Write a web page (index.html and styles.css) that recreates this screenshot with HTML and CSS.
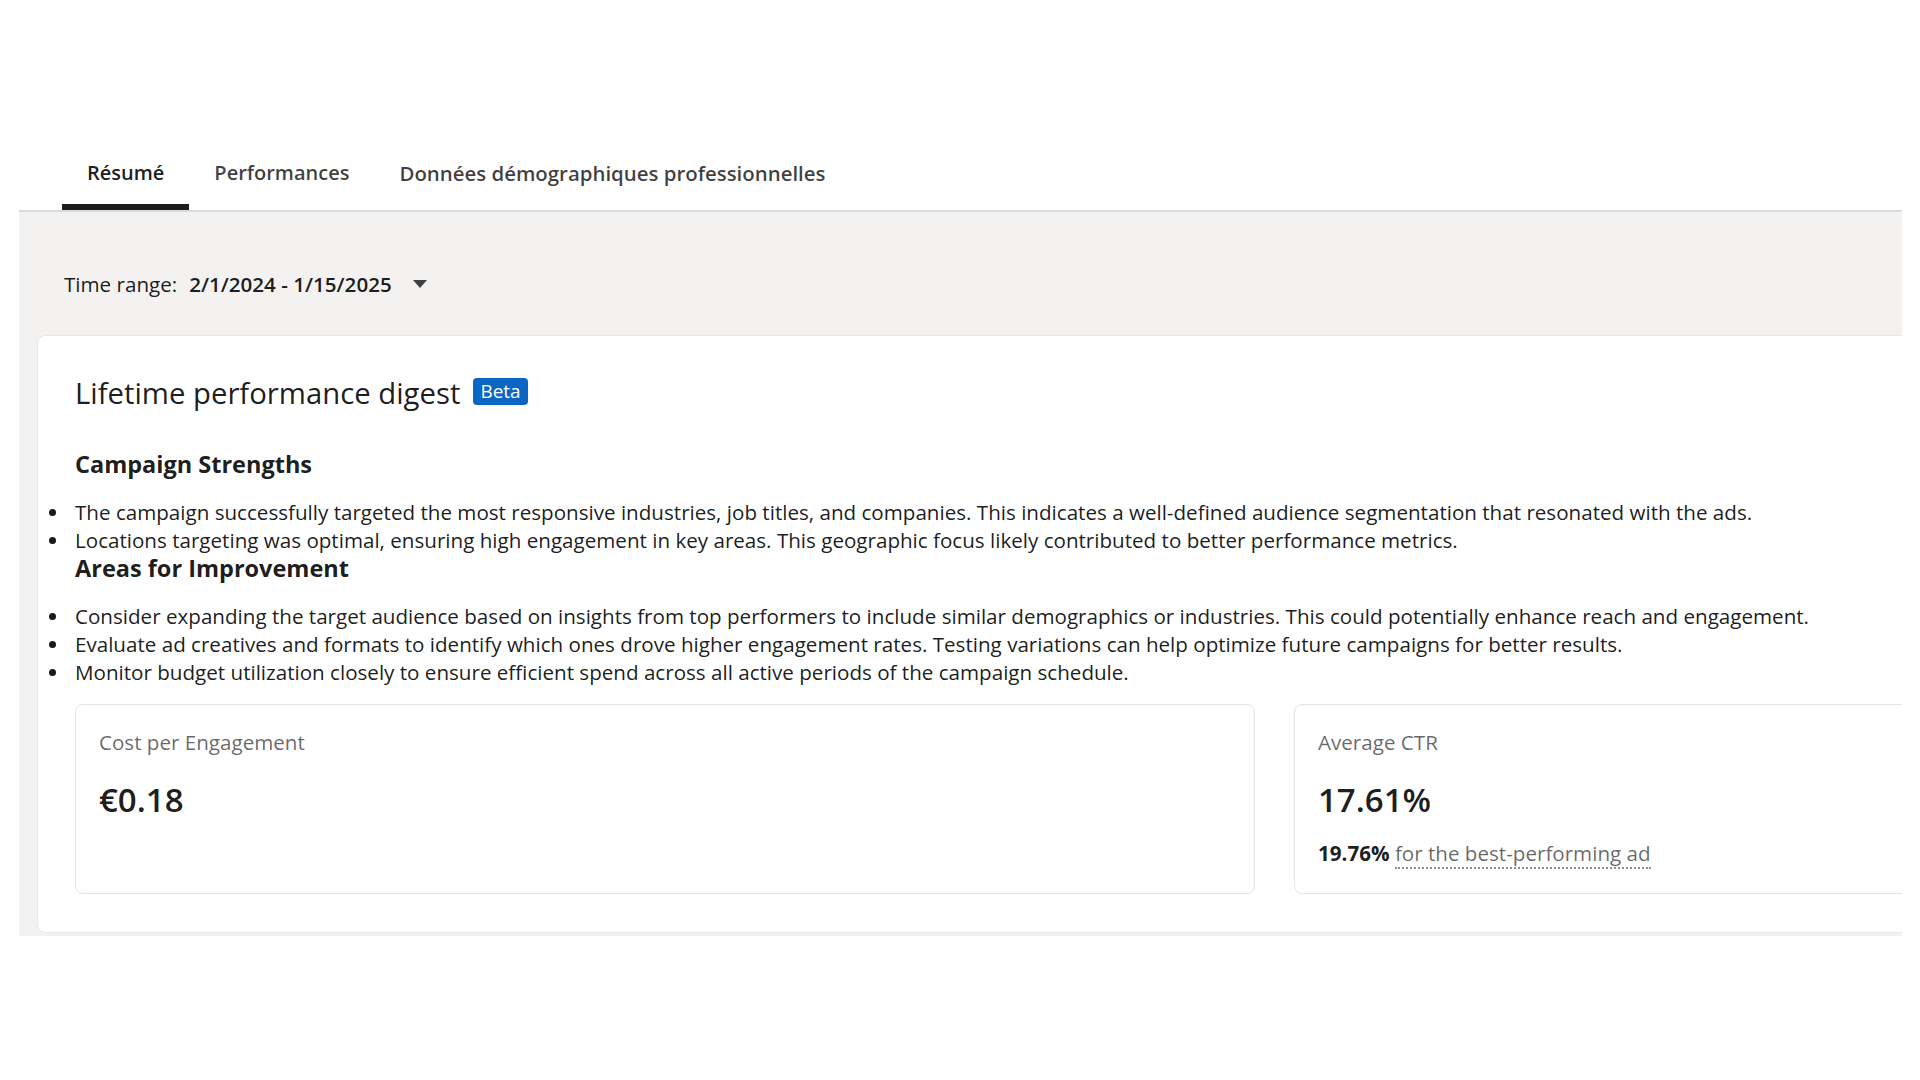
FILE: index.html
```html
<!DOCTYPE html>
<html lang="fr">
<head>
<meta charset="utf-8">
<title>Résumé</title>
<link rel="stylesheet" href="styles.css">
</head>
<body>
<div class="wrap">
  <nav class="tabs">
    <div class="tab active">Résumé</div>
    <div class="tab">Performances</div>
    <div class="tab">Données démographiques professionnelles</div>
  </nav>
  <section class="panel">
    <div class="range">
      <span class="range-label">Time range:</span>
      <span class="range-value">2/1/2024 - 1/15/2025</span>
      <svg class="caret" width="14" height="8" viewBox="0 0 14 8"><path d="M0 0 L14 0 L7 8 Z" fill="#404040"/></svg>
    </div>
    <div class="card">
      <div class="title-row">
        <h2 class="title">Lifetime performance digest</h2>
        <span class="badge">Beta</span>
      </div>
      <h3 class="heading first">Campaign Strengths</h3>
      <ul class="list">
        <li>The campaign successfully targeted the most responsive industries, job titles, and companies. This indicates a well-defined audience segmentation that resonated with the ads.</li>
        <li>Locations targeting was optimal, ensuring high engagement in key areas. This geographic focus likely contributed to better performance metrics.</li>
      </ul>
      <h3 class="heading">Areas for Improvement</h3>
      <ul class="list">
        <li>Consider expanding the target audience based on insights from top performers to include similar demographics or industries. This could potentially enhance reach and engagement.</li>
        <li>Evaluate ad creatives and formats to identify which ones drove higher engagement rates. Testing variations can help optimize future campaigns for better results.</li>
        <li>Monitor budget utilization closely to ensure efficient spend across all active periods of the campaign schedule.</li>
      </ul>
      <div class="metrics">
        <div class="metric">
          <div class="metric-label">Cost per Engagement</div>
          <div class="metric-value">€0.18</div>
        </div>
        <div class="metric">
          <div class="metric-label">Average CTR</div>
          <div class="metric-value">17.61%</div>
          <div class="metric-sub"><strong>19.76%</strong> <span class="dotted">for the best-performing ad</span></div>
        </div>
      </div>
    </div>
  </section>
</div>
</body>
</html>
```

FILE: styles.css
```css
* { box-sizing: border-box; }
html, body { margin: 0; padding: 0; background: #fff; }
body {
  font-family: "Open Sans", "Noto Sans", sans-serif;
  color: rgba(0,0,0,0.9);
  font-size: 20.6px;
  line-height: 28px;
  overflow: hidden;
  width: 1920px;
  height: 1080px;
}
.wrap {
  width: 1883px;
  margin-left: 19px;
  padding-top: 159px;
}
.tabs {
  display: flex;
  padding-left: 43px;
}
.tab {
  padding: 0 25px 17px;
  border-bottom: 6px solid transparent;
  font-size: 20px;
  font-weight: 600;
  color: rgba(0,0,0,0.75);
  white-space: nowrap;
}
.tab:last-child { font-size: 20.4px; }
.tab.active {
  border-bottom-color: #1d1d1d;
  color: rgba(0,0,0,0.9);
}
.panel {
  background: #f3f2f1;
  border-top: 2px solid #dadada;
  overflow: hidden;
  padding: 58px 0 4px 0;
}
.range {
  display: flex;
  align-items: center;
  padding-left: 45px;
  margin-bottom: 38px;
}
.range-label { color: rgba(0,0,0,0.9); }
.range-value { font-weight: 600; margin-left: 12px; }
.caret { margin-left: 21px; }
.card {
  width: max-content;
  margin-left: 19px;
  background: #fff;
  border-radius: 8px;
  padding: 39px 37px 38px;
  box-shadow: 0 0 0 1px rgba(0,0,0,0.04);
}
.title-row { display: flex; align-items: center; }
.title {
  margin: 0;
  font-size: 29.3px;
  line-height: 36px;
  font-weight: 400;
}
.badge {
  margin-left: 13px;
  margin-top: -3px;
  background: #0a66c2;
  color: #fff;
  border-radius: 4px;
  font-size: 19px;
  line-height: 27px;
  padding: 0 7px;
}
.heading {
  margin: 39px 0 20px;
  font-size: 23.5px;
  line-height: 28px;
  font-weight: 700;
}
.heading + .list { margin-top: 0; }
.list + .heading { margin-top: 0; }
.list {
  list-style: none;
  margin: 0;
  padding: 0;
}
.list li {
  display: flex;
  align-items: center;
  white-space: nowrap;
}
.list li::before {
  content: "";
  flex: none;
  width: 7px;
  height: 7px;
  border-radius: 50%;
  background: #1a1a1a;
  margin-left: -26px;
  margin-right: 19px;
}
.metrics {
  display: grid;
  grid-template-columns: 1180px 1180px;
  column-gap: 39px;
  margin-top: 18px;
}
.metric {
  height: 190px;
  border: 1px solid #e3e3e3;
  border-radius: 8px;
  padding: 23px 23px;
}
.metric-label { color: rgba(0,0,0,0.6); }
.metric-value {
  margin-top: 23px;
  font-size: 33px;
  line-height: 42px;
  font-weight: 600;
}
.metric-sub { margin-top: 18px; }
.metric-sub strong { font-weight: 700; }
.dotted {
  color: rgba(0,0,0,0.6);
  border-bottom: 2px dotted rgba(0,0,0,0.45);
}
```
